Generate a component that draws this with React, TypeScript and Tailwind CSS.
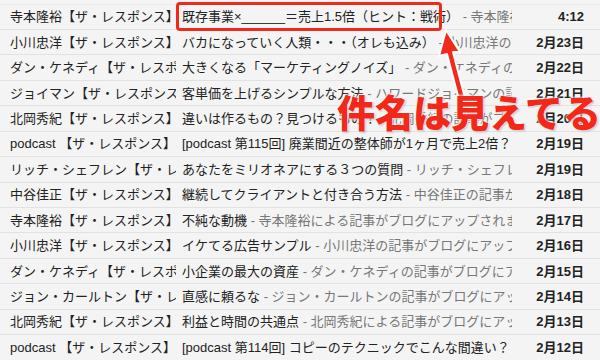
import React from "react";

const rows: [string, string, string, string][] = [
  ["寺本隆裕【ザ・レスポンス】", "既存事業×______＝売上1.5倍（ヒント：戦術）", " - 寺本隆裕による記事がブログに", "4:12"],
  ["小川忠洋【ザ・レスポンス】", "バカになっていく人類・・・（オレも込み）", " - 小川忠洋の記事がブログに", "2月23日"],
  ["ダン・ケネディ【ザ・レスポンス】", "大きくなる「マーケティングノイズ」", " - ダン・ケネディの記事が", "2月22日"],
  ["ジョイマン【ザ・レスポンス】", "客単価を上げるシンプルな方法", " - ハワードジョイマンの記事が", "2月21日"],
  ["北岡秀紀【ザ・レスポンス】", "違いは作るもの？見つけるもの？", " - 北岡秀紀の記事がブログに", "2月20日"],
  ["podcast 【ザ・レスポンス】", "[podcast 第115回] 廃業間近の整体師が1ヶ月で売上2倍？", " - ", "2月19日"],
  ["リッチ・シェフレン【ザ・レスポンス】", "あなたをミリオネアにする３つの質問", " - リッチ・シェフレンの記事が", "2月19日"],
  ["中谷佳正【ザ・レスポンス】", "継続してクライアントと付き合う方法", " - 中谷佳正の記事がブログに", "2月18日"],
  ["寺本隆裕【ザ・レスポンス】", "不純な動機", " - 寺本隆裕による記事がブログにアップされました", "2月17日"],
  ["小川忠洋【ザ・レスポンス】", "イケてる広告サンプル", " - 小川忠洋の記事がブログにアップされました", "2月16日"],
  ["ダン・ケネディ【ザ・レスポンス】", "小企業の最大の資産", " - ダン・ケネディの記事がブログにアップされました", "2月15日"],
  ["ジョン・カールトン【ザ・レスポンス】", "直感に頼るな", " - ジョン・カールトンの記事がブログにアップされました", "2月14日"],
  ["北岡秀紀【ザ・レスポンス】", "利益と時間の共通点", " - 北岡秀紀による記事がブログにアップされました", "2月13日"],
  ["podcast 【ザ・レスポンス】", "[podcast 第114回] コピーのテクニックでこんな間違い？", " - ", "2月12日"],
];

const font = { fontFamily: '"Liberation Sans", "Noto Sans CJK JP", sans-serif' };

export default function App() {
  return (
    <div className="relative w-[600px] h-[360px] overflow-hidden bg-[#f4f4f4]" style={font}>
      <div className="pt-[3.5px]">
        <div className="border-t border-[#e9e9e9]" />
        {rows.map((r, i) => (
          <div key={i} className="flex items-center h-[25.45px] border-b border-[#e2e2e2] text-[13px] text-[#222] leading-[19px]">
            <div className="w-[166px] ml-[10px] shrink-0 overflow-hidden whitespace-nowrap">{r[0]}</div>
            <div className="w-[330px] ml-[6px] shrink-0 overflow-hidden whitespace-nowrap">
              <span>{r[1]}</span>
              <span className="text-[#777]">{r[2]}</span>
            </div>
            <div className="flex-1 text-right pr-[16px] font-bold text-[#222]">{r[3]}</div>
          </div>
        ))}
      </div>

      {/* red highlight box */}
      <div className="absolute left-[176px] top-[2px] w-[266px] h-[29px] border-[3px] border-[#ee2a1b] rounded-[4px]" />

      {/* arrow */}
      <svg className="absolute left-[425px] top-[24px]" width="60" height="80" viewBox="0 0 60 80">
        <path d="M21 6 L35 28 L28 28 L40 74 L34 76 L22 30 L14 32 Z" fill="#f22a1a" stroke="#fff" strokeWidth="2" strokeLinejoin="round" />
      </svg>

      {/* annotation */}
      <div
        className="absolute left-[337px] top-[92px] text-[38px] font-black leading-none text-[#f2281a] whitespace-nowrap"
        style={{ fontFamily: '"Noto Sans CJK JP", sans-serif', textShadow: "0 0 3px #fff, 0 0 3px #fff, 1px 1px 2px rgba(0,0,0,0.4)" }}
      >
        件名は見えてる
      </div>
    </div>
  );
}
